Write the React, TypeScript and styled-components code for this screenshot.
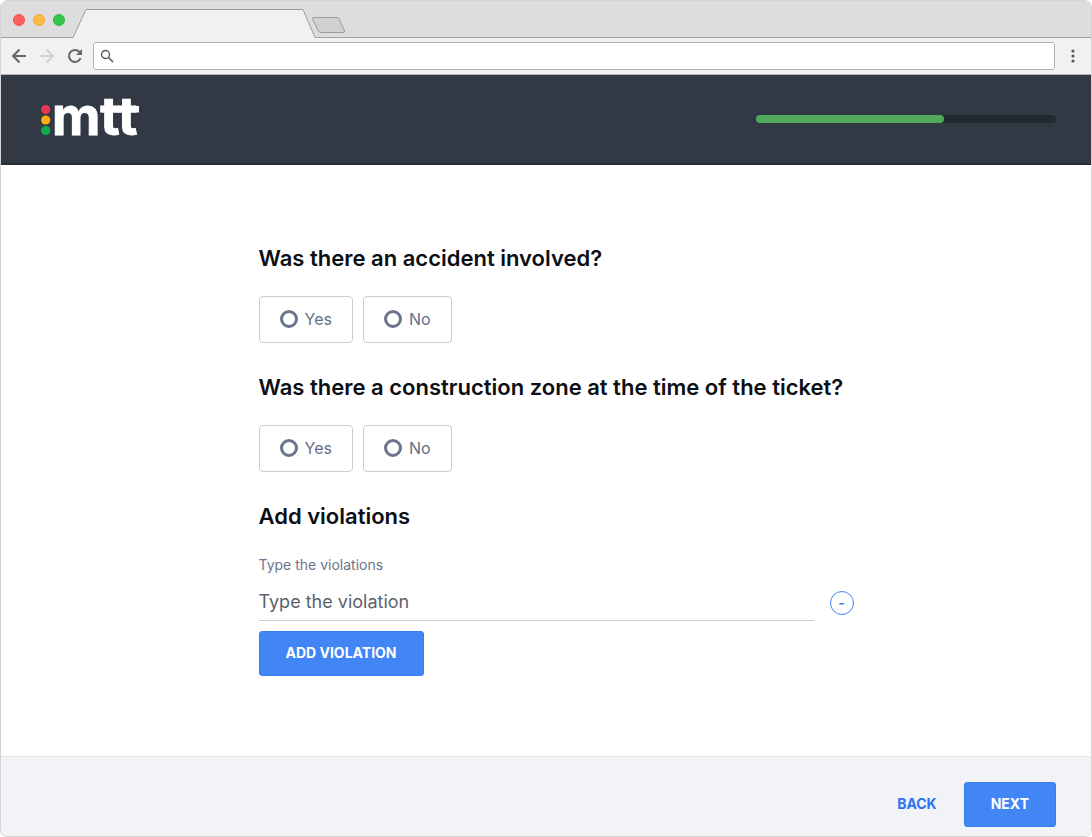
import React, { useState } from "react";
import styled, { createGlobalStyle } from "styled-components";

const Global = createGlobalStyle`
  *, *::before, *::after { box-sizing: border-box; }
  html, body { margin: 0; background: #ffffff; }
  body, button, input { font-family: Inter, "Liberation Sans", sans-serif; }
`;

const Window = styled.div`
  display: flex;
  flex-direction: column;
  min-height: 100vh;
  border: 1px solid #d3d3d3;
  border-radius: 7px;
  overflow: hidden;
  background: #ffffff;
`;

const TabStrip = styled.div`
  display: flex;
  align-items: flex-end;
  height: 37px;
  padding-left: 12px;
  background: #dddddd;
  box-shadow: inset 0 -1px #a0a0a0;
`;

const Lights = styled.div`
  display: flex;
  gap: 8px;
  width: 60px;
  padding-bottom: 12px;
`;

const Light = styled.span<{ $fill: string; $edge: string }>`
  width: 12px;
  height: 12px;
  border: 1px solid ${(p) => p.$edge};
  border-radius: 50%;
  background: ${(p) => p.$fill};
`;

const TabShape = styled.svg`
  display: block;
  flex: none;
`;

const Toolbar = styled.div`
  display: flex;
  align-items: center;
  height: 37px;
  padding: 0 10px;
  gap: 10px;
  background: #f1f1f1;
  border-bottom: 1px solid #b5b5b5;
`;

const ToolButton = styled.button`
  display: flex;
  flex: none;
  padding: 0;
  border: 0;
  background: none;
`;

const NavButtons = styled.div`
  display: flex;
  gap: 12px;
`;

const AddressBar = styled.label`
  display: flex;
  flex: 1;
  align-items: center;
  gap: 8px;
  height: 28px;
  padding: 0 6px;
  border: 1px solid #b3b3b3;
  border-radius: 3px;
  background: #ffffff;
`;

const AddressInput = styled.input`
  flex: 1;
  min-width: 0;
  border: 0;
  outline: 0;
  background: none;
  font-size: 14px;
`;

const Header = styled.header`
  display: flex;
  align-items: center;
  justify-content: space-between;
  height: 90px;
  padding: 0 35px 0 39px;
  background: #323944;
  border-bottom: 2px solid #272e38;
`;

const Logo = styled.svg`
  display: block;
  font-family: Inter, "Liberation Sans", sans-serif;
`;

const Track = styled.div`
  width: 300px;
  height: 8px;
  border-radius: 4px;
  background: #22292f;
`;

const Bar = styled.div`
  height: 8px;
  border-radius: 4px;
  background: #50a95d;
`;

const Main = styled.main`
  flex: 1;
  padding: 79px 20px 80px 40px;
`;

const Form = styled.form`
  max-width: 595px;
  margin: 0 auto;
`;

const Question = styled.fieldset`
  min-width: 0;
  margin: 0 0 30px;
  padding: 0;
  border: 0;
`;

const Legend = styled.legend`
  margin-bottom: 24px;
  padding: 0;
  color: #0c0f14;
  font-size: 22px;
  font-weight: 600;
  line-height: 28px;
`;

const Heading = styled(Legend).attrs({ as: "h2" })`
  margin-top: 0;
`;

const Options = styled.div`
  display: flex;
  gap: 10px;
`;

const Option = styled.label`
  display: flex;
  align-items: center;
  gap: 7px;
  height: 47px;
  padding: 0 20px 2px;
  border: 1px solid #cccccc;
  border-radius: 4px;
  color: #646e87;
  font-size: 16px;
`;

const Radio = styled.input`
  appearance: none;
  width: 18px;
  height: 18px;
  margin: 0;
  border: 3px solid #6a748c;
  border-radius: 50%;
  &:checked { background: #4285f4; }
`;

const FieldLabel = styled.label`
  display: block;
  margin-bottom: 8px;
  padding-top: 1px;
  color: #6a748c;
  font-size: 14px;
  line-height: 20px;
`;

const FieldRow = styled.div`
  display: flex;
  align-items: center;
  gap: 16px;
  margin-bottom: 10px;
`;

const TextField = styled.input`
  flex: 1;
  min-width: 0;
  height: 38px;
  padding: 0;
  border: 0;
  border-bottom: 1px solid #cccccc;
  border-radius: 0;
  outline: 0;
  color: #0c0f14;
  font-size: 18px;
  &::placeholder { color: #5b646b; opacity: 1; }
`;

const RemoveButton = styled.button`
  width: 24px;
  height: 24px;
  margin-top: 2px;
  padding: 0;
  border: 1px solid #3f83f6;
  border-radius: 50%;
  background: #ffffff;
  color: #2f78f2;
  font-size: 14px;
  font-weight: 600;
  line-height: 20px;
`;

const Button = styled.button<{ $quiet?: boolean }>`
  height: 45px;
  padding: 0 26px 2px;
  border: 1px solid ${(p) => (p.$quiet ? "transparent" : "#3a7df0")};
  border-radius: 3px;
  background: ${(p) => (p.$quiet ? "transparent" : "#4285f4")};
  color: ${(p) => (p.$quiet ? "#2a74ee" : "#ffffff")};
  font-size: 14px;
  font-weight: 700;
`;

const Footer = styled.footer`
  display: flex;
  align-items: flex-end;
  justify-content: flex-end;
  height: 80px;
  padding: 0 35px 9px;
  background: #f2f3f7;
  border-top: 1px solid #e5e7e9;
`;

function YesNo({ name, title }: { name: string; title: string }) {
  return (
    <Question>
      <Legend>{title}</Legend>
      <Options>
        {["Yes", "No"].map((answer) => (
          <Option key={answer}>
            <Radio type="radio" name={name} value={answer} />
            {answer}
          </Option>
        ))}
      </Options>
    </Question>
  );
}

function BrowserChrome() {
  return (
    <>
      <TabStrip>
        <Lights>
          <Light $fill="#fc615d" $edge="#ee5350" />
          <Light $fill="#fdbc40" $edge="#eca93a" />
          <Light $fill="#34c749" $edge="#2bb63f" />
        </Lights>
        <TabShape width="274" height="29" viewBox="0 0 274 29" aria-hidden="true">
          <path d="M0 28.500 13 .5H230L242 28.500V29H0Z" fill="#f1f1f1" />
          <path d="M0 28.500 13 .5H230L242 28.500" fill="none" stroke="#9c9c9c" />
          <path d="M242 28.500H274" stroke="#a0a0a0" />
          <path d="M240.500 8.500H264Q265.500 8.500 266 9.500L271.500 22Q272 23.500 270.500 23.500H248Q246.500 23.500 245.500 22L239.500 10Q239 8.500 240.500 8.500Z" fill="#d0d0d0" stroke="#9c9c9c" />
        </TabShape>
      </TabStrip>
      <Toolbar>
        <NavButtons>
          <ToolButton aria-label="Go back">
            <svg width="16" height="16" fill="none" stroke="#666666" strokeWidth="2">
              <path d="M15 8H2M8.500 1.500 2 8l6.500 6.500" />
            </svg>
          </ToolButton>
          <ToolButton aria-label="Go forward">
            <svg width="16" height="16" fill="none" stroke="#d3d3d3" strokeWidth="2">
              <path d="M1 8H14M7.500 1.500 14 8l-6.500 6.500" />
            </svg>
          </ToolButton>
          <ToolButton aria-label="Reload">
            <svg width="16" height="16" fill="none" stroke="#666666" strokeWidth="2">
              <path d="M12.500 4A6 6 0 1 0 13.600 10" />
              <path d="M15 1V7H9Z" fill="#666666" stroke="none" />
            </svg>
          </ToolButton>
        </NavButtons>
        <AddressBar>
          <svg width="14" height="14" fill="none" stroke="#555555" aria-hidden="true">
            <circle cx="5.500" cy="5.500" r="4" strokeWidth="1.300" />
            <path d="m8.500 8.500 4.500 4.500" strokeWidth="1.600" />
          </svg>
          <AddressInput type="text" aria-label="Address" />
        </AddressBar>
        <ToolButton aria-label="Browser menu">
          <svg width="16" height="16" fill="#5a5a5a">
            <circle cx="8" cy="3" r="1.600" />
            <circle cx="8" cy="8" r="1.600" />
            <circle cx="8" cy="13" r="1.600" />
          </svg>
        </ToolButton>
      </Toolbar>
    </>
  );
}

export default function App() {
  const [progress] = useState(62.7);
  return (
    <>
      <Global />
      <Window>
        <BrowserChrome />
        <Header>
          <Logo width="106" height="70" viewBox="0 0 106 70" role="img" aria-label="mtt">
            <circle cx="5.700" cy="25.500" r="4.600" fill="#e8384f" />
            <circle cx="5.700" cy="36" r="4.600" fill="#fdae0a" />
            <circle cx="5.700" cy="46.500" r="4.600" fill="#0caf50" />
            <text x="12" y="51" fontSize="53" fontWeight="700" fill="#ffffff" stroke="#ffffff" strokeWidth="1">mtt</text>
            <rect x="62" y="22" width="37" height="6.500" fill="#ffffff" />
          </Logo>
          <Track role="progressbar" aria-label="Progress" aria-valuenow={progress}>
            <Bar style={{ width: `${progress}%` }} />
          </Track>
        </Header>
        <Main>
          <Form onSubmit={(e) => e.preventDefault()}>
            <YesNo name="accident" title="Was there an accident involved?" />
            <YesNo
              name="construction"
              title="Was there a construction zone at the time of the ticket?"
            />
            <Heading>Add violations</Heading>
            <FieldLabel htmlFor="violation">Type the violations</FieldLabel>
            <FieldRow>
              <TextField id="violation" type="text" placeholder="Type the violation" />
              <RemoveButton type="button" aria-label="Remove violation">-</RemoveButton>
            </FieldRow>
            <Button type="button">ADD VIOLATION</Button>
          </Form>
        </Main>
        <Footer>
          <Button $quiet type="button">BACK</Button>
          <Button type="button">NEXT</Button>
        </Footer>
      </Window>
    </>
  );
}
